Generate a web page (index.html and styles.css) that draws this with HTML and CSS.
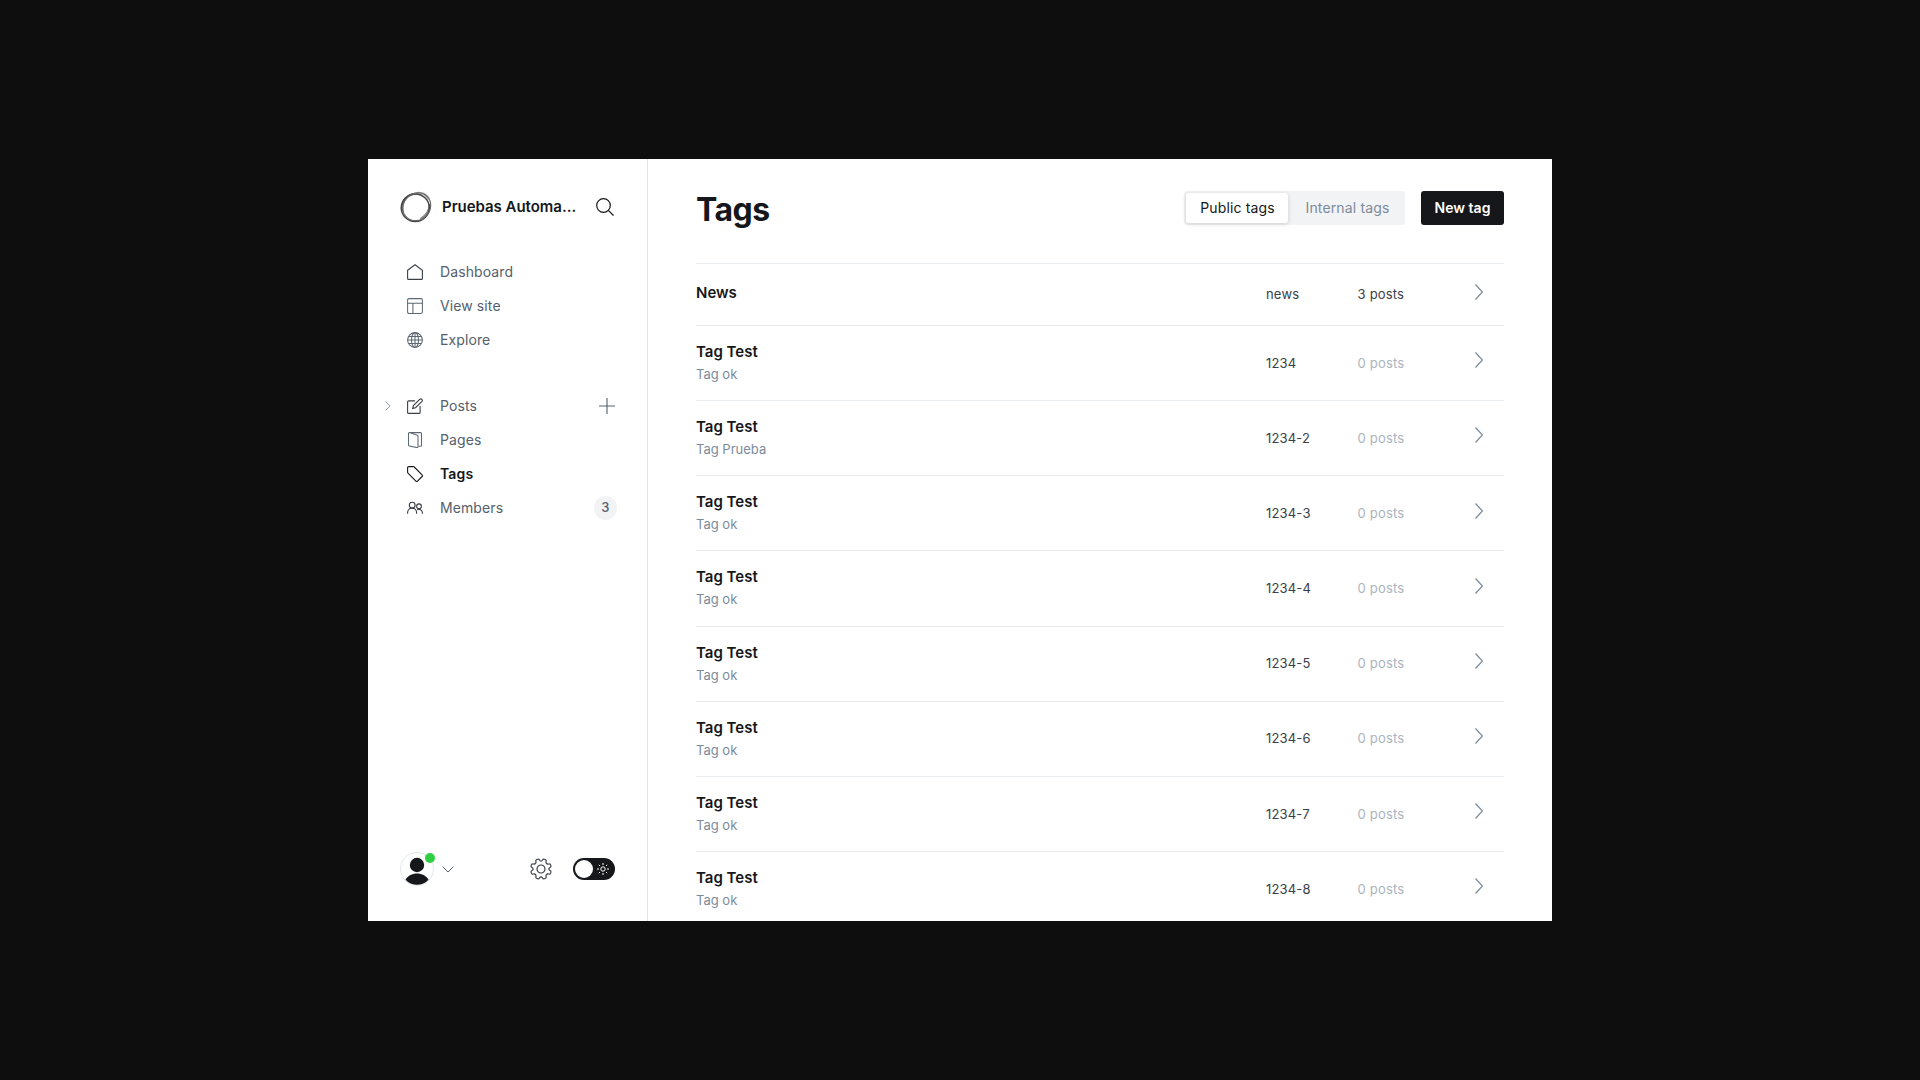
FILE: index.html
```html
<!DOCTYPE html>
<html lang="en">
<head>
<meta charset="utf-8">
<title>Tags</title>
<link rel="stylesheet" href="styles.css">
</head>
<body>
<svg class="defs" aria-hidden="true">
  <symbol id="chev" viewBox="0 0 8 16"><path d="M.5.5 7.4 8 .5 15.500"/></symbol>
  <symbol id="cog" viewBox="-11 -11 22 22" overflow="visible">
    <path id="cog-q" d="M0-7.800C1.600-7.800 1.400-9.950 2.670-9.950 3.400-9.950 5.150-9.300 5.150-8.600 5.200-7.600 4.400-6.600 5.500-5.500 6.600-4.400 7.600-5.200 8.600-5.150 9.300-5.150 9.950-3.400 9.950-2.670 9.950-1.400 7.800-1.600 7.800 0"/>
    <use href="#cog-q" transform="rotate(90)"/><use href="#cog-q" transform="rotate(180)"/><use href="#cog-q" transform="rotate(270)"/>
    <circle r="4"/>
  </symbol>
</svg>
<div class="window">
  <aside class="sidebar">
    <header class="site">
      <svg class="logo" viewBox="0 0 32 32">
        <path d="M14 3.200C19 .9 26 2 28.800 8.500" stroke="#b5b5b5" stroke-width="2.600"/>
        <path d="M29.500 13c.8 5.500-3 12-9 15" stroke="#8c8c8c" stroke-width="2.400"/>
        <path d="M2.200 20C1 12 5.500 5 13 3.200" stroke="#777" stroke-width="2.400"/>
        <ellipse cx="15.300" cy="16.800" rx="14" ry="13.800" stroke="#444" stroke-width="1.500"/>
        <ellipse cx="16.800" cy="15.700" rx="14.600" ry="13.200" transform="rotate(-45 16.800 15.700)" stroke="#666" stroke-width="1.100"/>
      </svg>
      <span class="site-name">Pruebas Automa...</span>
      <svg class="search" viewBox="0 0 18 18"><circle cx="7.500" cy="7.500" r="6.800"/><path d="m12.300 12.300 5.200 5.200"/></svg>
    </header>
    <nav class="nav">
      <a class="item"><svg class="icon" viewBox="0 0 16 16"><path d="M.6 6.200 8 .7l7.400 5.500v8.200a1 1 0 0 1-1 1H1.600a1 1 0 0 1-1-1z"/></svg><span class="label">Dashboard</span></a>
      <a class="item"><svg class="icon light" viewBox="0 0 16 16"><rect x=".6" y=".6" width="14.800" height="14.800" rx="1.300"/><path d="M.6 5.300h14.800M5.900 5.300v10.100"/></svg><span class="label">View site</span></a>
      <a class="item"><svg class="icon light" viewBox="0 0 16 16"><circle cx="8" cy="8" r="7.400"/><ellipse cx="8" cy="8" rx="3.500" ry="7.400"/><path d="M8 .6v14.800M.6 8h14.800M1.700 4.500h12.600M1.700 11.500h12.600"/></svg><span class="label">Explore</span></a>
    </nav>
    <nav class="nav">
      <a class="item"><svg class="expand" viewBox="0 0 6 10"><path d="m.7.600 4.400 4.400-4.400 4.400"/></svg><svg class="icon" viewBox="0 0 16 16"><path d="M8 2.900H1.600a1 1 0 0 0-1 1v10.500a1 1 0 0 0 1 1h10.500a1 1 0 0 0 1-1V8M5.700 10.400l.7-2.800 6.500-6.400a1.500 1.500 0 0 1 2.100 2.100L8.500 9.700z"/></svg><span class="label">Posts</span><svg class="plus" viewBox="0 0 16 16"><path d="M8 0v16M0 8h16"/></svg></a>
      <a class="item"><svg class="icon light" viewBox="0 0 16 16"><path d="M2.500.6h11a1 1 0 0 1 1 1v11.600a1 1 0 0 1-1 1h-1.700M2.500.6a1 1 0 0 0-1 1v11.300a1 1 0 0 0 .8 1l7.500 1.700a1 1 0 0 0 1.200-1V4.200a1 1 0 0 0-.7-1L2.500.6z"/></svg><span class="label">Pages</span></a>
      <a class="item active"><svg class="icon" viewBox="0 0 16 16"><path d="M1.700.6h4.600a1.200 1.200 0 0 1 .9.400l7.900 7.900a1.100 1.100 0 0 1 0 1.600l-4.600 4.600a1.100 1.100 0 0 1-1.600 0L1 7.200a1.200 1.200 0 0 1-.4-.9V1.700A1.100 1.100 0 0 1 1.700.6z"/></svg><span class="label">Tags</span></a>
      <a class="item"><svg class="icon" viewBox="0 0 16 16"><circle cx="5.200" cy="5.200" r="2.900"/><circle cx="12" cy="6.300" r="2.400"/><path d="M.6 13.800v-1.200a4.500 4.500 0 0 1 9 0v1.200M10.200 9.800a3.500 3.500 0 0 1 5.200 3v1"/></svg><span class="label">Members</span><span class="count">3</span></a>
    </nav>
    <footer class="foot">
      <span class="avatar">
        <svg class="face" viewBox="0 0 34 34"><circle class="ring" cx="17" cy="17" r="16.500"/><circle cx="17" cy="13" r="7.200"/><path d="M5.500 27.800c2.500-4 6.500-6.200 11.500-6.200s9 2.200 11.500 6.200c-3 3.200-7 5-11.500 5s-8.500-1.800-11.500-5z"/></svg>
        <i class="dot"></i>
      </span>
      <svg class="down" viewBox="0 0 12 7"><path d="m.7.700 5.300 5.300L11.300.7"/></svg>
      <svg class="gear"><use href="#cog"/></svg>
      <span class="toggle"><i class="knob"></i><svg class="sun" viewBox="0 0 12 12"><circle cx="6" cy="6" r="2.200"/><path d="M6 0v2M6 10v2M0 6h2M10 6h2M1.800 1.800l1.200 1.200M9 9l1.200 1.200M1.800 10.200 3 9M9 3l1.200-1.200"/></svg></span>
    </footer>
  </aside>
  <main class="main">
    <header class="head">
      <h1 class="heading">Tags</h1>
      <div class="tabs"><span class="tab on">Public tags</span><span class="tab">Internal tags</span></div>
      <a class="new">New tag</a>
    </header>
    <ol class="list">
      <li class="row short"><div class="name"><h3>News</h3></div><span class="slug">news</span><span class="num has">3 posts</span><svg class="go"><use href="#chev"/></svg></li>
      <li class="row"><div class="name"><h3>Tag Test</h3><p>Tag ok</p></div><span class="slug">1234</span><span class="num">0 posts</span><svg class="go"><use href="#chev"/></svg></li>
      <li class="row"><div class="name"><h3>Tag Test</h3><p>Tag Prueba</p></div><span class="slug">1234-2</span><span class="num">0 posts</span><svg class="go"><use href="#chev"/></svg></li>
      <li class="row"><div class="name"><h3>Tag Test</h3><p>Tag ok</p></div><span class="slug">1234-3</span><span class="num">0 posts</span><svg class="go"><use href="#chev"/></svg></li>
      <li class="row"><div class="name"><h3>Tag Test</h3><p>Tag ok</p></div><span class="slug">1234-4</span><span class="num">0 posts</span><svg class="go"><use href="#chev"/></svg></li>
      <li class="row"><div class="name"><h3>Tag Test</h3><p>Tag ok</p></div><span class="slug">1234-5</span><span class="num">0 posts</span><svg class="go"><use href="#chev"/></svg></li>
      <li class="row"><div class="name"><h3>Tag Test</h3><p>Tag ok</p></div><span class="slug">1234-6</span><span class="num">0 posts</span><svg class="go"><use href="#chev"/></svg></li>
      <li class="row"><div class="name"><h3>Tag Test</h3><p>Tag ok</p></div><span class="slug">1234-7</span><span class="num">0 posts</span><svg class="go"><use href="#chev"/></svg></li>
      <li class="row"><div class="name"><h3>Tag Test</h3><p>Tag ok</p></div><span class="slug">1234-8</span><span class="num">0 posts</span><svg class="go"><use href="#chev"/></svg></li>
    </ol>
  </main>
</div>
</body>
</html>
```
FILE: styles.css
```css
* { box-sizing: border-box; }
body {
  margin: 0;
  height: 1080px;
  padding-top: 159px;
  overflow: hidden;
  background: #0e0e0e;
  font-family: Inter, sans-serif;
  color: #15171a;
}
h1, h3, p, ol { margin: 0; padding: 0; list-style: none; }
svg { fill: none; stroke: currentColor; flex: none; }
.defs { display: none; }

.window {
  display: flex;
  width: 1184px;
  height: 762px;
  margin: 0 auto;
  overflow: hidden;
  background: #fff;
}

.sidebar {
  display: flex;
  flex-direction: column;
  flex: none;
  width: 280px;
  padding: 32px 32px 35px;
  border-right: 1px solid #e1e4e8;
}
.site { display: flex; align-items: center; height: 32px; }
.logo { width: 32px; height: 32px; }
.site-name {
  flex: 1;
  margin-left: 10px;
  padding-bottom: 1px;
  font-size: 15px;
  font-weight: 600;
  letter-spacing: -.03px;
  white-space: nowrap;
}
.search { width: 18px; height: 18px; stroke-width: 1.2; margin-right: 1px; }

.nav { margin-top: 32px; }
.item {
  display: flex;
  align-items: center;
  position: relative;
  height: 34px;
  padding-left: 7px;
  font-size: 14px;
  letter-spacing: .1px;
  color: #54606c;
}
.label { padding-bottom: 2px; }
.icon { width: 16px; height: 16px; margin-right: 17px; stroke-width: 1.1; stroke: #394047; }
.light { stroke-width: 1.05; stroke: #5d6873; }
.active { color: #15171a; font-weight: 600; letter-spacing: .15px; }
.active .icon { stroke: #15171a; }
.expand { position: absolute; left: -15px; top: 12px; width: 6px; height: 10px; stroke: #8e9ba8; }
.plus { width: 16px; height: 16px; margin-left: auto; stroke-width: 1.1; stroke: #54606c; }
.count {
  width: 23px;
  height: 24px;
  margin: 0 -2px 0 auto;
  border-radius: 12px;
  background: #f1f3f5;
  text-align: center;
  font-size: 13px;
  font-weight: 500;
  line-height: 23px;
}

.foot { display: flex; align-items: center; height: 34px; margin-top: auto; }
.avatar { position: relative; width: 34px; height: 34px; }
.face { display: block; width: 34px; height: 34px; fill: #15171a; stroke: none; }
.ring { fill: #fff; stroke: #e4e7ea; }
.dot { position: absolute; right: -1px; top: 1px; width: 10px; height: 10px; border-radius: 50%; background: #30cf43; }
.down { width: 12px; height: 7px; margin-left: 8px; stroke: #54606c; }
.gear { width: 22px; height: 22px; margin-left: 76px; stroke-width: 1.2; stroke: #394047; }
.toggle {
  display: flex;
  align-items: center;
  justify-content: space-between;
  width: 42px;
  height: 22px;
  margin-left: auto;
  padding: 0 6px 0 2px;
  border-radius: 11px;
  background: #15171a;
}
.knob { width: 18px; height: 18px; border-radius: 50%; background: #fff; }
.sun { width: 12px; height: 12px; stroke: #fff; }

.main { flex: 1; padding: 32px 48px 0; }
.head { display: flex; align-items: center; height: 34px; margin-bottom: 38px; }
.heading { flex: 1; padding-top: 3px; font-size: 32px; line-height: 36px; font-weight: 700; letter-spacing: -.5px; }
.tabs { display: flex; height: 34px; padding: 2px; border-radius: 3px; background: #f1f3f5; }
.tab {
  width: 102px;
  padding-left: 1px;
  border-radius: 3px;
  text-align: center;
  font-size: 14px;
  line-height: 30px;
  letter-spacing: .15px;
  color: #7c8b9a;
}
.tab:last-child { width: 115px; padding-left: 4px; }
.tab.on { background: #fff; color: #15171a; box-shadow: 0 1px 4px rgba(0, 0, 0, .16); }
.new {
  width: 83px;
  margin-left: 16px;
  border-radius: 3px;
  background: #15171a;
  text-align: center;
  font-size: 14px;
  font-weight: 600;
  line-height: 34px;
  color: #fff;
}

.row {
  display: grid;
  grid-template-columns: 570px 91.6px 117.4px 8px;
  align-items: center;
  height: 75.17px;
  border-top: 1px solid #e9ecee;
}
.short { height: 61.9px; }
.name { padding-bottom: 1.5px; }
.name h3 { font-size: 15px; font-weight: 600; line-height: 24px; }
.name p { font-size: 13px; line-height: 20.6px; color: #7c8b9a; }
.short .name { padding-bottom: 3.5px; }
.slug, .num { padding-bottom: .8px; font-size: 13px; line-height: 20px; letter-spacing: .18px; color: #394047; }
.num { color: #abb4be; }
.has { color: #394047; }
.go { width: 8px; height: 16px; margin-bottom: 5.4px; stroke: #7c8b9a; stroke-width: 1.2; }
```
